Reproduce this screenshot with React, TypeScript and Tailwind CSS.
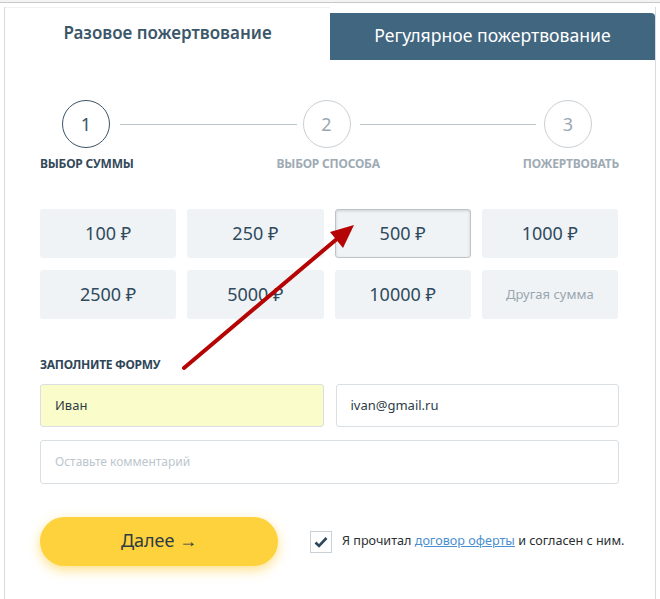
const amounts = ["100 ₽", "250 ₽", "500 ₽", "1000 ₽", "2500 ₽", "5000 ₽", "10000 ₽"];

function Step({ n, active }: { n: number; active?: boolean }) {
  return (
    <div
      className={
        "flex h-[48px] w-[48px] shrink-0 items-center justify-center rounded-full border text-[18px] " +
        (active ? "border-[#3a5468] text-[#3a5468]" : "border-[#c9d0d6] text-[#9aa7b1]")
      }
    >
      {n}
    </div>
  );
}

export default function App() {
  return (
    <div className="relative h-[599px] w-[660px] overflow-hidden bg-white font-['Noto_Sans',sans-serif]">
      <div className="h-[3px] border-b border-[#c8c8c8] bg-[#f3f3f3]" />
      <div className="ml-[4px] mt-[4px] w-[652px] border-l border-r border-[#d6dde2] pb-10">
        {/* tabs */}
        <div className="flex h-[53px]">
          <div className="flex w-[325px] items-center justify-center border-t border-[#eef1f3] pb-[2px] text-[17px] font-semibold text-[#3b5769]">
            Разовое пожертвование
          </div>
          <div className="mt-[6px] flex flex-1 items-center justify-center rounded-tr-[4px] bg-[#41667f] pb-[2px] text-[17.6px] text-white">
            Регулярное пожертвование
          </div>
        </div>

        <div className="pl-[35px] pr-[36px]">
          {/* steps */}
          <div className="mt-[40px] flex items-center pl-[22px] pr-[27px]">
            <Step n={1} active />
            <div className="ml-[10px] mr-[6px] h-px flex-1 bg-[#b9c3ca]" />
            <Step n={2} />
            <div className="ml-[9px] mr-[8px] h-px flex-1 bg-[#b9c3ca]" />
            <Step n={3} />
          </div>
          <div className="mt-[7px] flex justify-between text-[12px] font-bold tracking-[-0.2px]">
            <span className="text-[#34495a]">ВЫБОР СУММЫ</span>
            <span className="text-[#9eabb5]">ВЫБОР СПОСОБА</span>
            <span className="text-[#9eabb5]">ПОЖЕРТВОВАТЬ</span>
          </div>

          {/* amounts */}
          <div className="mt-[36px] grid w-[578px] grid-cols-4 gap-x-[11px] gap-y-[12px]">
            {amounts.map((a) => (
              <div
                key={a}
                className={
                  "flex h-[49px] items-center justify-center rounded-[3px] bg-[#eff3f6] text-[18px] text-[#2f4a5d] " +
                  (a === "500 ₽" ? "border border-[#bfc4c8] shadow-[inset_0_1px_3px_rgba(0,0,0,0.15)]" : "")
                }
              >
                {a}
              </div>
            ))}
            <div className="flex h-[49px] items-center justify-center rounded-[3px] bg-[#eff3f6] text-[13px] text-[#9aa6af]">
              Другая сумма
            </div>
          </div>

          {/* form */}
          <div className="mt-[37px] text-[12px] font-bold tracking-[-0.3px] text-[#2f4658]">ЗАПОЛНИТЕ ФОРМУ</div>
          <div className="mt-[10px] grid w-[579px] grid-cols-2 gap-x-[12px]">
            <div className="flex h-[43px] items-center rounded-[3px] border border-[#d9dfe3] bg-[#fafcc9] px-[14px] text-[13px] text-[#2d3c47]">
              Иван
            </div>
            <div className="flex h-[43px] items-center rounded-[3px] border border-[#d9dfe3] bg-white px-[14px] text-[13px] text-[#2d3c47]">
              ivan@gmail.ru
            </div>
          </div>
          <div className="mt-[13px] flex h-[44px] w-[579px] items-center rounded-[3px] border border-[#d9dfe3] px-[14px] text-[12px] text-[#bcc6cd]">
            Оставьте комментарий
          </div>

          {/* submit */}
          <div className="mt-[33px] flex items-center">
            <button className="flex h-[49px] w-[238px] shrink-0 items-center justify-center rounded-full bg-[#fed23c] pb-[2px] text-[18px] text-[#2f3b44] shadow-[0_4px_12px_rgba(254,200,40,0.55)]">
              Далее →
            </button>
            <div className="ml-[32px] flex h-[22px] w-[22px] shrink-0 items-center justify-center border border-[#c9d0d6] bg-white">
              <svg width="14" height="12" viewBox="0 0 14 12" fill="none">
                <path d="M1.5 6.5 L5 10 L12.5 2" stroke="#2d4659" strokeWidth="2.6" />
              </svg>
            </div>
            <div className="ml-[10px] whitespace-nowrap text-[12.6px] text-[#2a2f33]">
              Я прочитал{" "}
              <a href="#" className="text-[#4a8fd0] underline">
                договор оферты
              </a>{" "}
              и согласен с ним.
            </div>
          </div>
        </div>
      </div>

      {/* annotation arrow */}
      <svg className="pointer-events-none absolute left-0 top-0" width="660" height="599">
        <line x1="184" y1="368" x2="338" y2="238" stroke="#b50404" strokeWidth="4" strokeLinecap="round" />
        <polygon points="354,225 343,248 330,232" fill="#b50404" />
      </svg>
    </div>
  );
}
